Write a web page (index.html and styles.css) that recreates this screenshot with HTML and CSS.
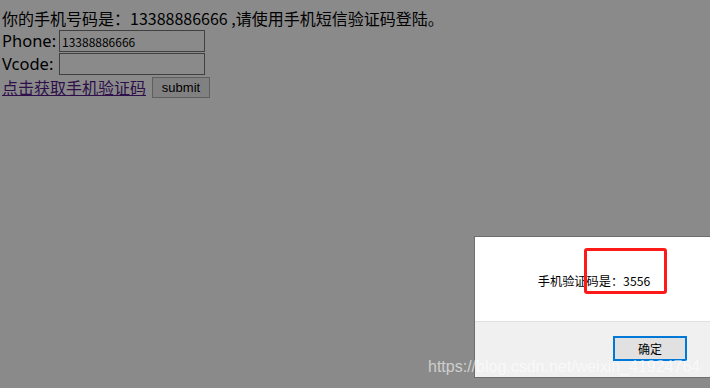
FILE: index.html
```html
<!DOCTYPE html>
<html>
<head>
<meta charset="utf-8">
<link rel="stylesheet" href="styles.css">
</head>
<body>
<div class="page">
  <div class="line">你的手机号码是：13388886666 ,请使用手机短信验证码登陆。</div>
  <div class="row"><label>Phone:</label><input class="field" type="text" value="13388886666"></div>
  <div class="row"><label>Vcode:</label><input class="field" type="text" value=""></div>
  <div class="row"><a class="link" href="#">点击获取手机验证码</a><button class="submit">submit</button></div>
</div>
<div class="overlay"></div>
<div class="dialog">
  <div class="msg-area"><span class="msg">手机验证码是：3556</span></div>
  <div class="btn-area"><button class="ok">确定</button></div>
</div>
<div class="highlight"></div>
<div class="watermark">https://blog.csdn.net/weixin_41924764</div>
</body>
</html>
```

FILE: styles.css
```css
html, body {
  margin: 0;
  padding: 0;
  width: 710px;
  height: 388px;
  overflow: hidden;
  background: #ffffff;
  position: relative;
}
.page {
  padding: 8px 0 0 2px;
  font-family: "Noto Sans CJK SC", "Noto Sans", sans-serif;
  font-size: 16px;
  color: #000;
  display: flex;
  flex-direction: column;
  gap: 1px;
}
.line {
  height: 21px;
  line-height: 21px;
}
.row {
  display: flex;
  align-items: center;
  gap: 3px;
  height: 22px;
  line-height: 22px;
}
.row label {
  font-family: "Noto Sans", "Open Sans", sans-serif;
  font-size: 16.5px;
  width: 54px;
}
.field {
  width: 146px;
  height: 22px;
  box-sizing: border-box;
  border: 1px solid #767676;
  padding: 0 2px;
  font-family: "Noto Sans CJK SC", sans-serif;
  font-size: 12px;
  margin: 0;
  background: #fff;
  color: #000;
}
.link {
  color: #551a8b;
  text-decoration: underline;
}
.submit {
  margin-left: 3px;
  height: 21px;
  width: 58px;
  border: 1px solid #b0b0b0;
  background: #efefef;
  font-family: "Liberation Sans", sans-serif;
  font-size: 13px;
  color: #000;
  padding: 0;
}
.overlay {
  position: absolute;
  inset: 0;
  background: rgba(0, 0, 0, 0.46);
}
.dialog {
  position: absolute;
  left: 474px;
  top: 236px;
  width: 240px;
  height: 142px;
  box-sizing: border-box;
  border: 1px solid #6e6e6e;
  background: #fff;
  display: flex;
  flex-direction: column;
}
.msg-area {
  height: 83px;
  display: flex;
  align-items: center;
  justify-content: center;
  padding-top: 1px;
}
.msg {
  font-family: "Noto Sans CJK SC", sans-serif;
  font-size: 12.2px;
  color: #000;
  margin-top: 2px;
}
.btn-area {
  flex: 1;
  background: #f0f0f0;
  border-top: 1px solid #dfdfdf;
  display: flex;
  justify-content: flex-end;
  align-items: flex-start;
  padding: 14px 26px 0 0;
}
.ok {
  width: 74px;
  height: 25px;
  box-sizing: border-box;
  border: 2px solid #0078d7;
  background: #e1e1e1;
  font-family: "Noto Sans CJK SC", sans-serif;
  font-size: 12px;
  color: #000;
  padding: 0;
}
.highlight {
  position: absolute;
  left: 584px;
  top: 248px;
  width: 83px;
  height: 46px;
  box-sizing: border-box;
  border: 3px solid #ff1a1a;
  border-radius: 3px;
}
.watermark {
  position: absolute;
  left: 428px;
  top: 358px;
  font-family: "Liberation Sans", Arial, sans-serif;
  font-size: 16px;
  color: rgba(255, 255, 255, 0.6);
  white-space: nowrap;
}
```
